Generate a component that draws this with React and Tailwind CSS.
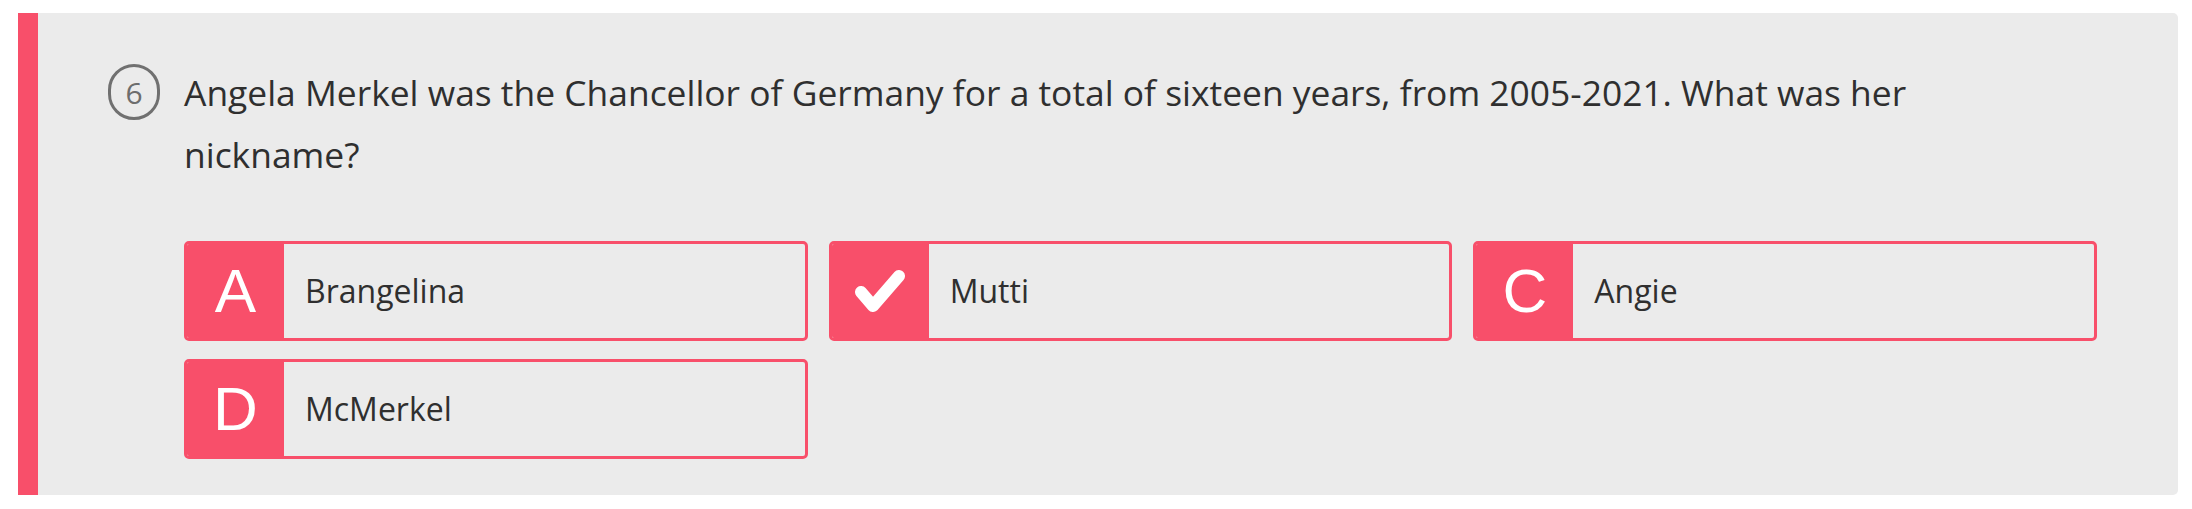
const options = [
  { key: 'A', label: 'Brangelina' },
  { key: 'B', label: 'Mutti', correct: true },
  { key: 'C', label: 'Angie' },
  { key: 'D', label: 'McMerkel' },
];

function Check() {
  return (
    <svg width="50" height="42" viewBox="0 0 50 42" fill="none">
      <polyline
        points="6,22 18,36 44,6"
        stroke="#ffffff"
        strokeWidth="12"
        strokeLinecap="round"
        strokeLinejoin="round"
      />
    </svg>
  );
}

function Option({ option }) {
  return (
    <button className="flex h-[100px] items-stretch overflow-hidden rounded-[5px] border-[3px] border-[#f84f6a] text-left">
      <div className="flex w-[97px] shrink-0 items-center justify-center bg-[#f84f6a] text-[62px] leading-none text-white font-['Liberation_Sans',Arial,sans-serif]">
        {option.correct ? <Check /> : option.key}
      </div>
      <div className="flex flex-1 items-center pl-[21px] text-[32px] text-[#2f2f2f]">
        {option.label}
      </div>
    </button>
  );
}

export default function App() {
  return (
    <div className="min-h-screen bg-white pt-[13px] pl-[18px] pr-[14px] font-['Open_Sans',sans-serif]">
      <div className="rounded-r-[5px] border-l-[20px] border-[#f84f6a] bg-[#ebebeb] pl-[70px] pr-[81px] pt-[48px] pb-[36px]">
        <div className="flex items-start gap-[24px]">
          <div className="mt-[3px] flex h-[56px] w-[52px] shrink-0 items-center justify-center rounded-full border-[3px] border-[#707070] text-[30px] text-[#6d6d6d]">
            6
          </div>
          <p className="w-[1850px] text-[35.4px] leading-[62px] text-[#2f2f2f]">
            Angela Merkel was the Chancellor of Germany for a total of sixteen years, from 2005-2021. What was her nickname?
          </p>
        </div>
        <div className="mt-[56px] ml-[76px] grid grid-cols-3 gap-x-[21px] gap-y-[18px]">
          {options.map((o) => (
            <Option key={o.key} option={o} />
          ))}
        </div>
      </div>
    </div>
  );
}
